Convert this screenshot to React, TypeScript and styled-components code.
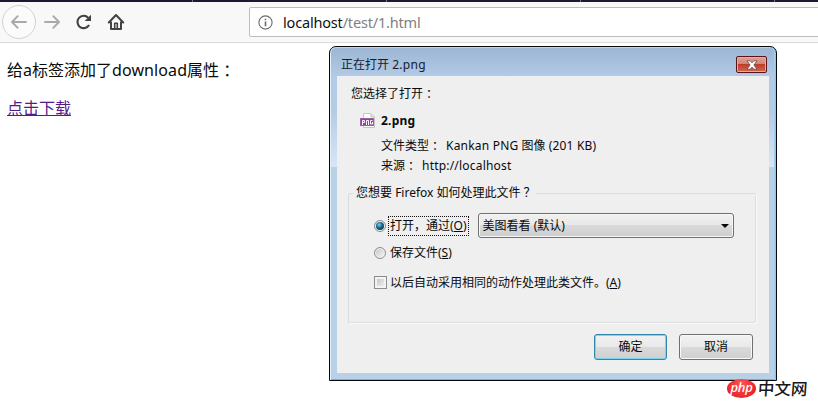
import React from "react";
import styled, { createGlobalStyle } from "styled-components";

const Global = createGlobalStyle`
  * { box-sizing: border-box; }
  html, body { margin: 0; padding: 0; }
  body {
    width: 818px;
    height: 408px;
    overflow: hidden;
    background: #fff;
    font-family: "Noto Sans", "Noto Sans CJK SC", sans-serif;
    color: #0a0a0a;
  }
`;

const Screen = styled.div`
  position: relative;
  width: 818px;
  height: 408px;
  overflow: hidden;
`;

const TabStrip = styled.div`
  height: 2px;
  background: #1d1a30;
  display: flex;
  gap: 193px;
  padding-left: 192px;
`;
const TabDivider = styled.span`
  width: 1px;
  flex: none;
  background: #77758a;
`;

const Toolbar = styled.div`
  height: 41px;
  display: flex;
  align-items: center;
  background: #f8f8f8;
  border-bottom: 1px solid #d9d9d9;
  padding-left: 2px;
`;
const BackButton = styled.div`
  width: 34px;
  height: 34px;
  flex: none;
  border: 1px solid #d2d2d2;
  border-radius: 50%;
  background: #fbfbfb;
  display: flex;
  align-items: center;
  justify-content: center;
`;
const ToolIcon = styled.div<{ $gap: number }>`
  width: 18px;
  height: 18px;
  flex: none;
  margin-left: ${(p) => p.$gap}px;
  display: flex;
`;
const AddressBar = styled.div`
  margin-left: 124px;
  width: 600px;
  flex: none;
  height: 30px;
  background: #fff;
  border: 1px solid #bdbdbd;
  border-radius: 2px;
  display: flex;
  align-items: center;
  padding-left: 8px;
`;
const Url = styled.div`
  margin-left: 10px;
  font-size: 14.5px;
  line-height: 20px;
  letter-spacing: -0.18px;
  color: #808080;
  white-space: pre;
`;
const Host = styled.span`
  color: #111;
`;

const Page = styled.main`
  padding: 16px 0 0 7px;
  font-size: 16px;
  line-height: 22px;
`;
const Paragraph = styled.p`
  margin: 0 0 16px;
  white-space: nowrap;
`;
const PageLink = styled.a`
  color: #551a8b;
  text-decoration: underline;
  text-underline-offset: 1px;
  text-decoration-thickness: 1px;
`;

const Latin = styled.span<{ $spacing?: number }>`
  letter-spacing: ${(p) => p.$spacing ?? 0}px;
`;
const Mark = styled.span<{ $shift?: number }>`
  padding-left: ${(p) => p.$shift ?? 3}px;
  margin-right: -${(p) => p.$shift ?? 3}px;
`;

const Dialog = styled.section`
  position: absolute;
  left: 329px;
  top: 46px;
  width: 448px;
  height: 335px;
  border: 1px solid #05080c;
  border-radius: 7px 7px 0 0;
  padding: 0 7px 7px;
  background:
    linear-gradient(#9bb5d2, #b3cae6) 0 0 / 100% 29px no-repeat,
    linear-gradient(#b3cbe8, #b5cce6 40%, #d7e6f5) 0 29px / 100% 91px no-repeat,
    #b9d1e6;
  box-shadow: inset 1px 0 #e3f0f8, inset -1px 0 #72d3ed, inset -2px 0 #a6cfec,
    inset 0 -1px #58bfd9, inset 0 1px #c1d3e6;
  font-size: 12px;
  line-height: 18px;
  white-space: nowrap;
`;
const TitleBar = styled.header`
  height: 29px;
  display: flex;
  justify-content: space-between;
  padding: 9px 2px 0 4px;
  color: #14202f;
`;
const CloseButton = styled.div`
  width: 31px;
  height: 17px;
  border: 1px solid #56151a;
  border-radius: 2px;
  box-shadow: inset 0 0 0 1px #e8aaa2;
  background: linear-gradient(#dfa196 0, #d38578 45%, #bd3c2b 48%, #d2684e 100%);
  display: flex;
  align-items: center;
  justify-content: center;
`;
const Body = styled.div`
  height: 297px;
  background: #efefef;
  padding: 9px 13px 0 11px;
`;
const Prompt = styled.div`
  padding-left: 3px;
  height: 18px;
`;
const FileRow = styled.div`
  display: flex;
  align-items: center;
  gap: 5px;
  height: 20px;
  margin: 8px 0 0 12px;
  font-weight: 700;
`;
const Detail = styled.div<{ $gap: number; $top: number }>`
  display: flex;
  gap: ${(p) => p.$gap}px;
  margin: ${(p) => p.$top}px 0 0 33px;
  height: 18px;
`;
const Group = styled.fieldset`
  height: 140px;
  margin: 9px 0 0;
  min-width: 0;
  width: 409px;
  padding: 10px 0 0 25px;
  border: 1px solid #dadcde;
  border-right-color: #fbfbfb;
  border-bottom-color: #fbfbfb;
  border-radius: 3px;
  box-shadow: inset -1px -1px #dadcde;
`;
const Legend = styled.legend`
  padding: 0 3px 0 2px;
  margin-left: -20px;
  height: 18px;
`;
const Choice = styled.div<{ $height: number }>`
  display: flex;
  align-items: center;
  height: ${(p) => p.$height}px;
`;
const Radio = styled.span`
  width: 12px;
  height: 12px;
  flex: none;
  border-radius: 50%;
  border: 1px solid #8a8d90;
  background: linear-gradient(135deg, #bfc3c6, #fafafa);
  box-shadow: inset 0 0 0 1px #f2f2f2;
  display: flex;
  align-items: center;
  justify-content: center;
`;
const RadioDot = styled.span`
  width: 8px;
  height: 8px;
  flex: none;
  border-radius: 50%;
  background: radial-gradient(circle at 40% 35%, #6fd2ee 0, #1b6088 45%, #0c2c4b 85%);
`;
const ChoiceLabel = styled.label<{ $focused?: boolean; $inset?: number }>`
  margin-left: ${(p) => p.$inset ?? 2}px;
  padding: 0 1px;
  height: 20px;
  line-height: 18px;
  border: ${(p) => (p.$focused ? "1px dotted #111" : "1px solid transparent")};
`;
const Key = styled.u`
  text-underline-offset: 1px;
  text-decoration-thickness: 1px;
`;
const CheckBox = styled.span`
  width: 13px;
  height: 13px;
  flex: none;
  border: 1px solid #8b8d8f;
  background: linear-gradient(135deg, #b9bec2, #f8f8f8);
  box-shadow: inset 0 0 0 2px #f3f3f3;
`;
const Select = styled.div`
  width: 256px;
  height: 25px;
  margin-left: 9px;
  border: 1px solid #707070;
  border-radius: 3px;
  box-shadow: inset 0 0 0 1px #f8f8f8;
  background: linear-gradient(#f1f1f1 0, #e8e8e8 48%, #dadada 50%, #cecece 100%);
  display: flex;
  align-items: center;
  justify-content: space-between;
  padding: 0 4px;
`;
const Actions = styled.footer`
  display: flex;
  justify-content: flex-end;
  gap: 12px;
  padding: 10px 3px 0 0;
`;
const Button = styled.button<{ $primary?: boolean }>`
  width: ${(p) => (p.$primary ? 73 : 74)}px;
  height: 26px;
  padding: 0;
  font: inherit;
  color: #0a0a0a;
  border: 1px solid ${(p) => (p.$primary ? "#2f86ad" : "#707070")};
  border-radius: 3px;
  box-shadow: inset 0 0 0 1px ${(p) => (p.$primary ? "#7fd3ee" : "#f8f8f8")};
  background: linear-gradient(#f2f2f2 0, #e9e9e9 48%, #dadada 50%, #cfcfcf 100%);
`;

const Watermark = styled.div`
  position: absolute;
  left: 727px;
  top: 379px;
  display: flex;
  align-items: center;
  height: 19px;
`;
const PhpBadge = styled.span`
  width: 29px;
  height: 19px;
  border-radius: 50%;
  background: radial-gradient(ellipse at 50% 25%, #ff5550, #e8232a 75%);
  color: #fff;
  font: italic 500 13px/16px "Noto Sans", sans-serif;
  letter-spacing: -0.2px;
  text-align: center;
`;
const SiteName = styled.span`
  margin-left: 2px;
  font: 500 16.5px/19px "Noto Sans CJK SC", sans-serif;
  color: #181818;
  transform: skewX(-4deg);
`;

const Arrow = ({ flip }: { flip?: boolean }) => (
  <svg width="18" height="18" viewBox="0 0 18 18" fill="none" stroke="#a9a9a9" strokeWidth="1.9" strokeLinecap="round" strokeLinejoin="round">
    <path d={flip ? "M2 9H16M10.3 3.2L16 9L10.3 14.8" : "M16 9H2M7.7 3.2L2 9L7.7 14.8"} />
  </svg>
);

const Reload = () => (
  <svg width="18" height="18" viewBox="0 0 18 18" fill="none" stroke="#424242" strokeWidth="2.1">
    <path d="M14.1 12A6.2 6.2 0 1 1 13.2 4.7" />
    <path d="M16 1.7V8H9.7Z" fill="#424242" stroke="none" />
  </svg>
);

const Home = () => (
  <svg width="18" height="18" viewBox="0 0 18 18" fill="none" stroke="#424242" strokeWidth="2" strokeLinejoin="round">
    <path d="M1.8 9.5L9 2L16.2 9.5" strokeLinecap="round" />
    <path d="M4 8.5V16H14V8.5" />
    <path d="M7.7 16V10.3H10.3V16" strokeWidth="1.6" />
  </svg>
);

const Info = () => (
  <svg width="15" height="15" viewBox="0 0 15 15" fill="none" stroke="#6b6b6b">
    <circle cx="7.5" cy="7.5" r="6.6" strokeWidth="1.1" />
    <path d="M7.5 6.5V11.2M7.5 3.7V5.3" strokeWidth="1.6" />
  </svg>
);

const CloseMark = () => (
  <svg width="12" height="10" viewBox="0 0 12 10">
    <path d="M1 .8H4.2L6 2.8L7.8 .8H11L7.9 5L11 9.2H7.8L6 7.2L4.2 9.2H1L4.1 5Z" fill="#fff" stroke="#67444a" strokeWidth=".8" />
  </svg>
);

const PngFile = () => (
  <svg width="16" height="16" viewBox="0 0 16 16" fill="none">
    <path d="M3.5 6V.5H11L14.5 4V14.5H3.5Z" fill="#fafafa" stroke="#c9c5c9" />
    <path d="M11 .5V4H14.5" fill="#d7e9ce" stroke="#b7cdb2" />
    <rect x=".5" y="5.5" width="13" height="7" fill="#92409a" stroke="#a55bac" />
    <path d="M2.5 12V7.5H4.5V9.5H2.5M6.5 12V7.5H8.5V12M12.5 7.5H10.5V11H12.5V9" stroke="#fff" />
  </svg>
);

const Caret = () => (
  <svg width="8" height="4" viewBox="0 0 8 4">
    <path d="M0 0H8L4 4Z" fill="#080808" />
  </svg>
);

export default function App() {
  return (
    <Screen lang="zh-CN">
      <Global />
      <TabStrip><TabDivider /><TabDivider /><TabDivider /><TabDivider /></TabStrip>
      <Toolbar>
        <BackButton><Arrow /></BackButton>
        <ToolIcon $gap={7}><Arrow flip /></ToolIcon>
        <ToolIcon $gap={14}><Reload /></ToolIcon>
        <ToolIcon $gap={14}><Home /></ToolIcon>
        <AddressBar>
          <Info />
          <Url><Host>localhost</Host>/test/1.html</Url>
        </AddressBar>
      </Toolbar>
      <Page>
        <Paragraph>给<Latin>a</Latin>标签添加了<Latin $spacing={0.1}>download</Latin>属性<Mark $shift={4}>：</Mark></Paragraph>
        <Paragraph><PageLink>点击下载</PageLink></Paragraph>
      </Page>

      <Dialog>
        <TitleBar>
          <span>正在打开 <Latin $spacing={0.3}>2.png</Latin></span>
          <CloseButton><CloseMark /></CloseButton>
        </TitleBar>
        <Body>
          <Prompt>您选择了打开<Mark>：</Mark></Prompt>
          <FileRow><PngFile /><Latin $spacing={0.25}>2.png</Latin></FileRow>
          <Detail $gap={5} $top={6}>
            <span>文件类型<Mark>：</Mark></span>
            <span><Latin $spacing={0.2}>Kankan PNG</Latin> 图像 <Latin $spacing={0.2}>(201 KB)</Latin></span>
          </Detail>
          <Detail $gap={5} $top={2}>
            <span>来源<Mark>：</Mark></span>
            <Latin $spacing={0.2}>http://localhost</Latin>
          </Detail>
          <Group>
            <Legend>您想要 <Latin>Firefox</Latin> 如何处理此文件<Mark>？</Mark></Legend>
            <Choice $height={27}>
              <Radio><RadioDot /></Radio>
              <ChoiceLabel $focused>打开，通过(<Key>O</Key>)</ChoiceLabel>
              <Select><span>美图看看 (默认)</span><Caret /></Select>
            </Choice>
            <Choice $height={28}>
              <Radio />
              <ChoiceLabel>保存文件(<Key>S</Key>)</ChoiceLabel>
            </Choice>
            <Choice $height={31}>
              <CheckBox />
              <ChoiceLabel $inset={1}>以后自动采用相同的动作处理此类文件。(<Key>A</Key>)</ChoiceLabel>
            </Choice>
          </Group>
          <Actions>
            <Button $primary>确定</Button>
            <Button>取消</Button>
          </Actions>
        </Body>
      </Dialog>

      <Watermark>
        <PhpBadge>php</PhpBadge>
        <SiteName>中文网</SiteName>
      </Watermark>
    </Screen>
  );
}
